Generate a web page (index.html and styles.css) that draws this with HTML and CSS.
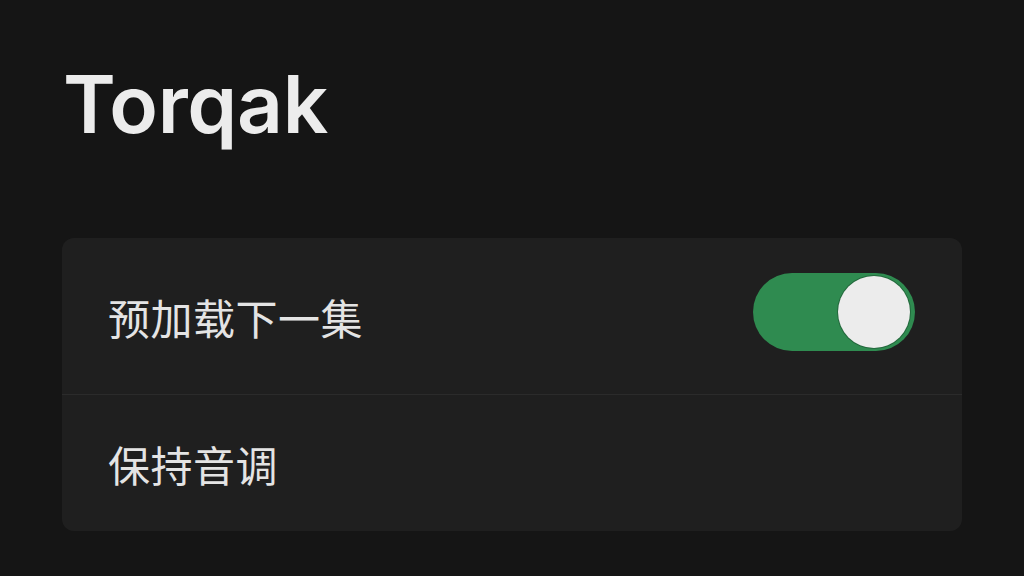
FILE: index.html
```html
<!DOCTYPE html>
<html lang="zh">
<head>
<meta charset="utf-8">
<link rel="stylesheet" href="styles.css">
</head>
<body>
<main class="page">
  <h1 class="title">Torqak</h1>
  <section class="card">
    <div class="row row-first">
      <span class="label">预加载下一集</span>
      <span class="toggle on"><span class="knob"></span></span>
    </div>
    <div class="row row-second">
      <span class="label">保持音调</span>
    </div>
  </section>
</main>
</body>
</html>
```
FILE: styles.css
```css
html, body {
  margin: 0;
  padding: 0;
  background: #151515;
  width: 1024px;
  height: 576px;
  overflow: hidden;
}
.page {
  padding: 0 62px;
  font-family: Inter, "Noto Sans CJK SC", sans-serif;
}
.title {
  margin: 0;
  padding-top: 56px;
  height: 238px;
  box-sizing: border-box;
  font-size: 80px;
  font-weight: 600;
  line-height: 96px;
  color: #ececec;
  padding-left: 1px;
  letter-spacing: -0.3px;
}
.card {
  width: 900px;
  background: #1f1f1f;
  border-radius: 12px;
  overflow: hidden;
}
.row {
  display: flex;
  align-items: center;
  justify-content: space-between;
  padding: 0 47px 0 46px;
}
.row-first {
  height: 156px;
  border-bottom: 1px solid #2b2b2b;
}
.row-second {
  height: 136px;
}
.label {
  font-family: "Noto Sans CJK SC", sans-serif;
  font-size: 42px;
  font-weight: 400;
  color: #e4e4e4;
  letter-spacing: 0.5px;
}
.toggle {
  width: 162px;
  height: 78px;
  border-radius: 39px;
  background: #2f8b50;
  display: flex;
  align-items: center;
  justify-content: flex-end;
  padding-right: 5px;
  box-sizing: border-box;
  margin-bottom: 8px;
}
.knob {
  width: 72px;
  height: 72px;
  border-radius: 50%;
  background: #ececec;
  box-shadow: 0 0 0 1px rgba(0, 0, 0, 0.25);
}
```
